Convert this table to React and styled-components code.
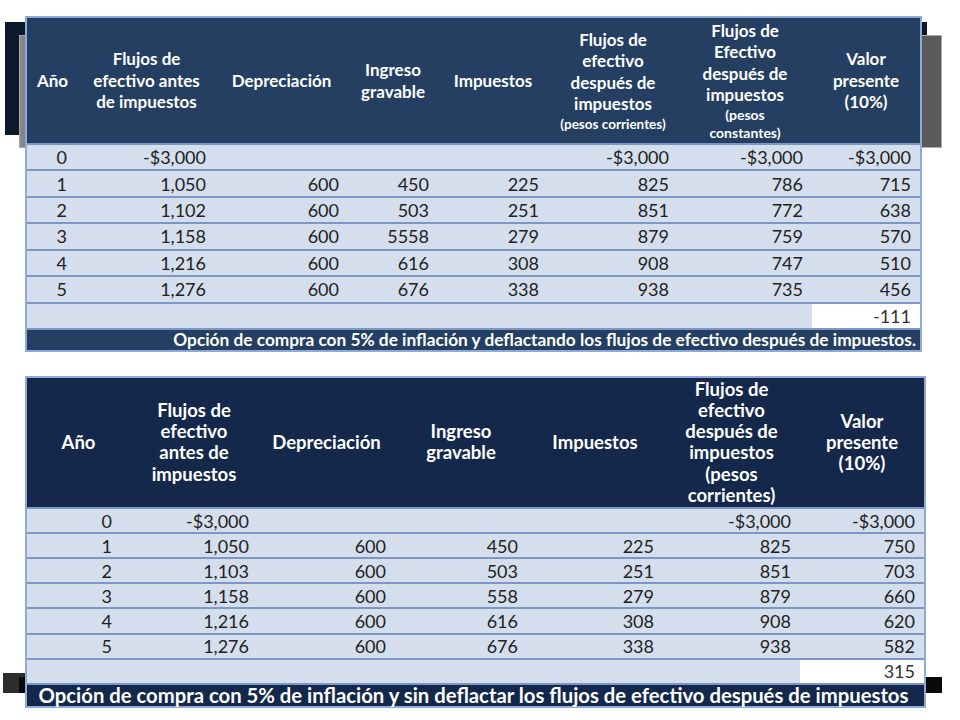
import React from 'react'
import styled, { createGlobalStyle } from 'styled-components'

const GlobalStyle = createGlobalStyle`
  body {
    margin: 0;
    background: #ffffff;
    font-family: Lato, "Open Sans", "Liberation Sans", sans-serif;
  }
`

const deflated = {
  cols: [51, 137, 133, 90, 110, 130, 134, 108],
  headBg: '#243f61',
  headHeight: 125,
  headSize: 17,
  headLine: 21.5,
  rowHeight: 26.43,
  yearPad: 11,
  heads: [
    ['Año'],
    ['Flujos de', 'efectivo antes', 'de impuestos'],
    ['Depreciación'],
    ['Ingreso', 'gravable'],
    ['Impuestos'],
    ['Flujos de', 'efectivo', 'después de', 'impuestos', { note: ['(pesos corrientes)'], size: 13.5 }],
    ['Flujos de', 'Efectivo', 'después de', 'impuestos', { note: ['(pesos', 'constantes)'], size: 14 }],
    ['Valor', 'presente', '(10%)'],
  ],
  rows: [
    ['0', '-$3,000', '', '', '', '-$3,000', '-$3,000', '-$3,000'],
    ['1', '1,050', '600', '450', '225', '825', '786', '715'],
    ['2', '1,102', '600', '503', '251', '851', '772', '638'],
    ['3', '1,158', '600', '5558', '279', '879', '759', '570'],
    ['4', '1,216', '600', '616', '308', '908', '747', '510'],
    ['5', '1,276', '600', '676', '338', '938', '735', '456'],
  ],
  total: '-111',
  footer: 'Opción de compra con 5% de inflación y deflactando los flujos de efectivo después de impuestos.',
  footerAlign: 'right',
  footerSize: 17.3,
  footerHeight: 22,
}

const nominal = {
  cols: [103, 128, 137, 132, 136, 137, 124],
  headBg: '#13284a',
  headHeight: 129,
  headSize: 18.5,
  headLine: 21.2,
  rowHeight: 25.14,
  yearPad: 18,
  heads: [
    ['Año'],
    ['Flujos de', 'efectivo', 'antes de', 'impuestos'],
    ['Depreciación'],
    ['Ingreso', 'gravable'],
    ['Impuestos'],
    ['Flujos de', 'efectivo', 'después de', 'impuestos', '(pesos', 'corrientes)'],
    ['Valor', 'presente', '(10%)'],
  ],
  rows: [
    ['0', '-$3,000', '', '', '', '-$3,000', '-$3,000'],
    ['1', '1,050', '600', '450', '225', '825', '750'],
    ['2', '1,103', '600', '503', '251', '851', '703'],
    ['3', '1,158', '600', '558', '279', '879', '660'],
    ['4', '1,216', '600', '616', '308', '908', '620'],
    ['5', '1,276', '600', '676', '338', '938', '582'],
  ],
  total: '315',
  footer: 'Opción de compra con 5% de inflación y sin deflactar los flujos de efectivo después de impuestos',
  footerAlign: 'center',
  footerSize: 20.3,
  footerHeight: 23,
}

const App = () => (
  <Page>
    <GlobalStyle />
    <Block>
      <DarkSlab $left={-20} $top={6} $width={922} $height={113} />
      <GreySlab $left={-6} $top={19} $width={923} $height={113} />
      <FlowTable data={deflated} />
    </Block>
    <Block $gap={24}>
      <BottomBar $left={-22} $top={297} $width={60} $height={20} $color="#2e2e2e" />
      <BottomBar $left={-6} $top={301} $width={923} $height={16} $color="#0a0a0a" />
      <FlowTable data={nominal} />
    </Block>
  </Page>
)

const FlowTable = ({ data }) => {
  const template = data.cols.map(c => `${c}px`).join(' ')
  const last = data.cols.length - 1
  return (
    <Table>
      <HeadRow $cols={template} $bg={data.headBg} $height={data.headHeight}>
        {data.heads.map((lines, i) => (
          <HeadCell key={i} $size={data.headSize} $line={data.headLine}>
            {lines.map((line, j) =>
              typeof line === 'string'
                ? <span key={j}>{line}</span>
                : line.note.map((n, k) => <Note key={`${j}-${k}`} $size={line.size}>{n}</Note>)
            )}
          </HeadCell>
        ))}
      </HeadRow>
      {data.rows.map((row, r) => (
        <Row key={r} $cols={template} $height={data.rowHeight}>
          {row.map((v, c) => (
            <Cell key={c} $year={c === 0} $yearPad={data.yearPad}>{v}</Cell>
          ))}
        </Row>
      ))}
      <Row $cols={template} $height={data.rowHeight}>
        {data.cols.map((_, c) => (
          <Cell key={c} $white={c === last} $muted>
            {c === last ? data.total : ''}
          </Cell>
        ))}
      </Row>
      <Footer
        $bg={data.headBg}
        $align={data.footerAlign}
        $size={data.footerSize}
        $height={data.footerHeight}
      >
        {data.footer}
      </Footer>
    </Table>
  )
}

const Page = styled.div`
  padding: 16px 0 0 25px;
  width: 960px;
  height: 720px;
  box-sizing: border-box;
  overflow: hidden;
`

const Block = styled.section`
  position: relative;
  width: max-content;
  margin-top: ${p => p.$gap || 0}px;
`

// slide decoration peeking out behind the tables
const DarkSlab = styled.div`
  position: absolute;
  left: ${p => p.$left}px;
  top: ${p => p.$top}px;
  width: ${p => p.$width}px;
  height: ${p => p.$height}px;
  background: #0c192a;
  z-index: 0;
`

const GreySlab = styled.div`
  position: absolute;
  left: ${p => p.$left}px;
  top: ${p => p.$top}px;
  width: ${p => p.$width}px;
  height: ${p => p.$height}px;
  background: linear-gradient(90deg, #8a8a8a 0%, #5a5a5a 3%, #5a5a5a 100%);
  border: 1px solid #a9a9a9;
  box-sizing: border-box;
  z-index: 1;
`

const BottomBar = styled.div`
  position: absolute;
  left: ${p => p.$left}px;
  top: ${p => p.$top}px;
  width: ${p => p.$width}px;
  height: ${p => p.$height}px;
  background: ${p => p.$color};
  z-index: 1;
`

const Table = styled.div`
  position: relative;
  z-index: 2;
  display: flex;
  flex-direction: column;
  width: max-content;
  border: 2px solid #8eaad6;
  background: #d5deec;
`

const HeadRow = styled.div`
  display: grid;
  grid-template-columns: ${p => p.$cols};
  height: ${p => p.$height}px;
  background: ${p => p.$bg};
`

const HeadCell = styled.div`
  display: flex;
  flex-direction: column;
  align-items: center;
  justify-content: center;
  color: #ffffff;
  font-weight: 700;
  font-size: ${p => p.$size}px;
  line-height: ${p => p.$line}px;
  text-align: center;
  white-space: nowrap;
`

const Note = styled.span`
  font-size: ${p => p.$size}px;
  line-height: 18px;
`

const Row = styled.div`
  display: grid;
  grid-template-columns: ${p => p.$cols};
  height: ${p => p.$height}px;
  box-sizing: border-box;
  border-top: 2px solid #7c97c4;
`

const Cell = styled.div`
  display: flex;
  align-items: center;
  justify-content: flex-end;
  padding-right: ${p => (p.$year ? p.$yearPad : 9)}px;
  background: ${p => (p.$white ? '#ffffff' : 'transparent')};
  color: ${p => (p.$muted ? '#333333' : '#222222')};
  font-size: 18px;
  white-space: nowrap;
`

const Footer = styled.div`
  height: ${p => p.$height}px;
  box-sizing: border-box;
  border-top: 2px solid #7c97c4;
  background: ${p => p.$bg};
  color: #ffffff;
  font-weight: 700;
  font-size: ${p => p.$size}px;
  line-height: ${p => p.$height - 2}px;
  text-align: ${p => p.$align};
  padding-right: 4px;
  white-space: nowrap;
`

export default App
